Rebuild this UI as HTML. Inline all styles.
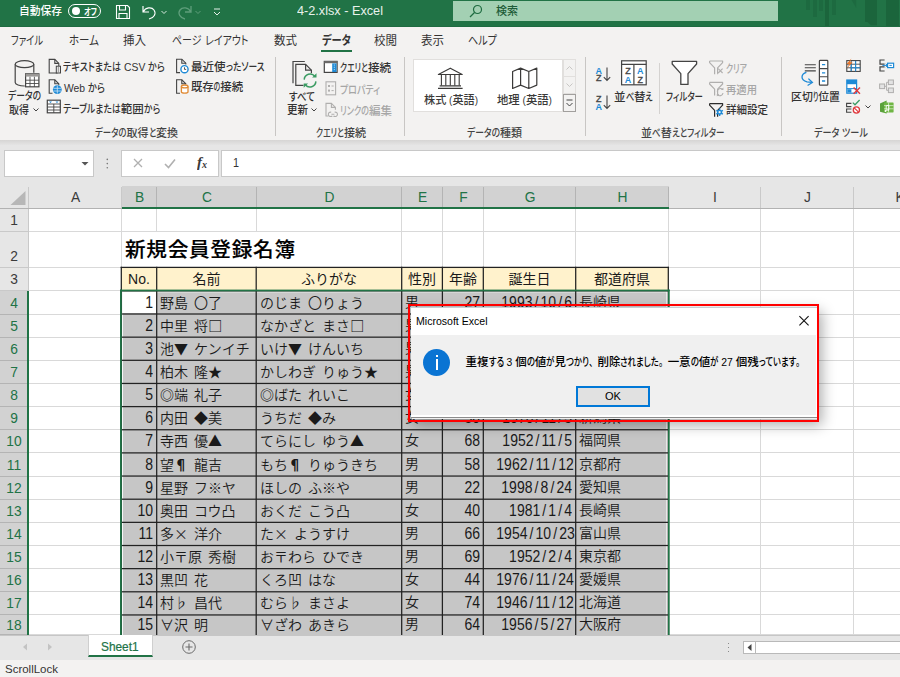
<!DOCTYPE html>
<html lang="ja"><head><meta charset="utf-8"><title>4-2.xlsx - Excel</title>
<style>
html,body{margin:0;padding:0;overflow:hidden;width:900px;height:677px}
body{background:#fff;font-family:"Liberation Sans","Noto Sans CJK JP",sans-serif;}
#root{position:absolute;left:0;top:0;width:900px;height:677px;overflow:hidden;background:#fff;contain:strict}
.b{position:absolute;display:block}
.t{position:absolute;white-space:nowrap;transform-origin:0 50%;display:block}
.k0{font-feature-settings:"palt"}
.k{display:inline-block;white-space:nowrap}
.k>span{display:inline-block;transform-origin:0 50%;font-feature-settings:"palt"}
.p>span{font-feature-settings:normal}
.c{position:absolute;white-space:nowrap;display:block;font-family:"Liberation Sans","Noto Sans CJK JP",sans-serif}
.sl{display:inline-block;width:9.4px;text-align:center}
</style></head>
<body>
<div id="root">
<div class="b" style="left:0px;top:0px;width:900px;height:27px;background:#217346"></div>
<div class="b" style="left:806px;top:0px;width:4px;height:10px;background:#1d6a40"></div>
<div class="b" style="left:813px;top:0px;width:4px;height:16.5px;background:#1d6a40"></div>
<div class="b" style="left:819px;top:0px;width:3.7px;height:11px;background:#1d6a40"></div>
<div class="b" style="left:825px;top:0px;width:4px;height:26px;background:#1b653c"></div>
<div class="b" style="left:832px;top:0px;width:3.7px;height:14.5px;background:#1d6a40"></div>
<div class="b" style="left:865.4px;top:0px;width:11.6px;height:22px;background:#1b653c"></div>
<div class="b" style="left:886.3px;top:0px;width:12.5px;height:26px;background:#1b653c"></div>
<svg class="b" style="left:851px;top:0px" width="6" height="9" viewBox="0 0 6 9"><path d="M0.6 0h4.6v8z" fill="#1d6a40"/></svg>
<svg class="b" style="left:865px;top:20px" width="13" height="6" viewBox="0 0 13 6"><path d="M0.4 0h11.6v5.2h-6z" fill="#1b653c"/></svg>
<div class="b" style="left:0px;top:25.6px;width:900px;height:1.4px;background:#1e6b41"></div>
<span class="t" style="left:19.00px;top:3.00px;font-size:11.5px;line-height:17px;color:#ffffff;font-weight:500;transform:scaleX(0.9348);">自動保存</span>
<div class="b" style="left:68px;top:4px;width:33px;height:14px;border:1px solid #fff;border-radius:8px;box-sizing:border-box"></div>
<div class="b" style="left:72px;top:7px;width:8px;height:8px;border-radius:4px;background:#fff"></div>
<span class="t" style="left:84.00px;top:4.50px;font-size:9px;line-height:14px;color:#ffffff;font-weight:700;"><span class="k" style="width:13.00px"><span style="transform:scaleX(0.7901)">オフ</span></span></span>
<svg class="b" style="left:114px;top:3px" width="18" height="18" viewBox="0 0 18 18"><path d="M2.5 2.5h11l2 2v11h-13z M5.5 2.5v4.5h6v-4.5 M5 15.5v-5h8v5" fill="none" stroke="#fff" stroke-width="1.1"/></svg>
<svg class="b" style="left:140px;top:3px" width="18" height="18" viewBox="0 0 18 18"><path d="M3 3v6h6 M3.5 8.5c2-4 8-5 10.5-1.5s0 8-5 9" fill="none" stroke="#fff" stroke-width="1.15"/></svg>
<svg class="b" style="left:160px;top:8px" width="8" height="8" viewBox="0 0 8 8"><path d="M1.5 3l2.5 2.5l2.5-2.5" fill="none" stroke="#d5e8dc" stroke-width="1"/></svg>
<svg class="b" style="left:176px;top:3px" width="18" height="18" viewBox="0 0 18 18"><path d="M15 3v6h-6 M14.5 8.5c-2-4-8-5-10.5-1.5s0 8 5 9" fill="none" stroke="#5f9e7b" stroke-width="1.3"/></svg>
<svg class="b" style="left:194px;top:8px" width="8" height="8" viewBox="0 0 8 8"><path d="M1.5 3l2.5 2.5l2.5-2.5" fill="none" stroke="#5f9e7b" stroke-width="1"/></svg>
<svg class="b" style="left:212px;top:6px" width="10" height="12" viewBox="0 0 10 12"><path d="M2 3h6 M2 6l3 3l3-3" fill="none" stroke="#e4f0e9" stroke-width="1"/></svg>
<span class="t" style="left:297.00px;top:2.00px;font-size:12px;line-height:18px;color:#e8f2ec;font-weight:500;transform:scaleX(1.0570);">4-2.xlsx  -  Excel</span>
<div class="b" style="left:453px;top:1px;width:325px;height:20px;background:#a3d0b3"></div>
<svg class="b" style="left:468px;top:3px" width="16" height="16" viewBox="0 0 16 16"><circle cx="9.5" cy="6.5" r="4" fill="none" stroke="#1e6b40" stroke-width="1.2"/><path d="M6.5 9.5l-4.5 4.5" stroke="#1e6b40" stroke-width="1.3"/></svg>
<span class="t" style="left:496.00px;top:3.00px;font-size:11px;line-height:16px;color:#1e5c38;font-weight:500;">検索</span>
<div class="b" style="left:0px;top:27px;width:900px;height:113px;background:#f3f2f1"></div>
<span class="t" style="left:11.00px;top:32.00px;font-size:12px;line-height:18px;color:#333333;font-weight:400;"><span class="k" style="width:32.00px"><span style="transform:scaleX(0.7699)">ファイル</span></span></span>
<span class="t" style="left:69.00px;top:32.00px;font-size:12px;line-height:18px;color:#333333;font-weight:400;"><span class="k" style="width:30.00px"><span style="transform:scaleX(0.8735)">ホーム</span></span></span>
<span class="t" style="left:123.00px;top:32.00px;font-size:12px;line-height:18px;color:#333333;font-weight:400;transform:scaleX(0.9577);">挿入</span>
<span class="t" style="left:172.00px;top:32.00px;font-size:12px;line-height:18px;color:#333333;font-weight:400;"><span class="k" style="width:29.51px"><span style="transform:scaleX(0.8303)">ページ</span></span><span style="font-size:0.9em"> </span><span class="k" style="width:43.49px"><span style="transform:scaleX(0.8303)">レイアウト</span></span></span>
<span class="t" style="left:274.00px;top:32.00px;font-size:12px;line-height:18px;color:#333333;font-weight:400;transform:scaleX(0.9577);">数式</span>
<span class="t" style="left:322.00px;top:32.00px;font-size:12px;line-height:18px;color:#333333;font-weight:700;"><span class="k" style="width:29.00px"><span style="transform:scaleX(0.8557)">データ</span></span></span>
<span class="t" style="left:374.00px;top:32.00px;font-size:12px;line-height:18px;color:#333333;font-weight:400;transform:scaleX(0.9577);">校閲</span>
<span class="t" style="left:421.00px;top:32.00px;font-size:12px;line-height:18px;color:#333333;font-weight:400;transform:scaleX(0.9577);">表示</span>
<span class="t" style="left:468.00px;top:32.00px;font-size:12px;line-height:18px;color:#333333;font-weight:400;"><span class="k" style="width:29.00px"><span style="transform:scaleX(0.8421)">ヘルプ</span></span></span>
<div class="b" style="left:321px;top:50px;width:31px;height:2px;background:#217346"></div>
<div class="b" style="left:275px;top:57px;width:1px;height:79px;background:#c8c6c4"></div>
<div class="b" style="left:404px;top:57px;width:1px;height:79px;background:#c8c6c4"></div>
<div class="b" style="left:585px;top:57px;width:1px;height:79px;background:#c8c6c4"></div>
<div class="b" style="left:781px;top:57px;width:1px;height:79px;background:#c8c6c4"></div>
<div class="b" style="left:659px;top:63px;width:1px;height:51px;background:#d4d2d0"></div>
<span class="t" style="left:95.00px;top:124.50px;font-size:11px;line-height:16px;color:#444444;font-weight:500;"><span class="k" style="width:31.59px"><span style="transform:scaleX(0.7638)">データの</span></span>取得<span class="k" style="width:7.41px"><span style="transform:scaleX(0.7638)">と</span></span>変換</span>
<span class="t" style="left:316.00px;top:124.50px;font-size:11px;line-height:16px;color:#444444;font-weight:500;"><span class="k" style="width:28.00px"><span style="transform:scaleX(0.7154)">クエリと</span></span>接続</span>
<span class="t" style="left:467.00px;top:124.50px;font-size:11px;line-height:16px;color:#444444;font-weight:500;"><span class="k" style="width:33.00px"><span style="transform:scaleX(0.7979)">データの</span></span>種類</span>
<span class="t" style="left:641.00px;top:124.50px;font-size:11px;line-height:16px;color:#444444;font-weight:500;">並<span class="k" style="width:8.67px"><span style="transform:scaleX(0.7714)">べ</span></span>替<span class="k" style="width:52.33px"><span style="transform:scaleX(0.7714)">えとフィルター</span></span></span>
<span class="t" style="left:814.00px;top:124.50px;font-size:11px;line-height:16px;color:#444444;font-weight:500;"><span class="k" style="width:25.41px"><span style="transform:scaleX(0.8264)">データ</span></span><span style="font-size:0.9em"> </span><span class="k" style="width:25.84px"><span style="transform:scaleX(0.8264)">ツール</span></span></span>
<span class="t" style="left:8.00px;top:88.00px;font-size:11.5px;line-height:17px;color:#333333;font-weight:500;"><span class="k" style="width:33.00px"><span style="transform:scaleX(0.7633)">データの</span></span></span>
<span class="t" style="left:9.00px;top:101.50px;font-size:11.5px;line-height:17px;color:#333333;font-weight:500;transform:scaleX(0.8696);">取得</span>
<svg class="b" style="left:32px;top:106px" width="8" height="8" viewBox="0 0 8 8"><path d="M1.5 2.5l2.5 2.5l2.5-2.5" fill="none" stroke="#444" stroke-width="1"/></svg>
<span class="t" style="left:63.00px;top:59.00px;font-size:11.5px;line-height:17px;color:#333333;font-weight:500;"><span class="k" style="width:58.18px"><span style="transform:scaleX(0.7954)">テキストまたは</span></span><span style="font-size:0.9em"> CSV </span><span class="k" style="width:16.79px"><span style="transform:scaleX(0.7954)">から</span></span></span>
<span class="t" style="left:64.00px;top:79.50px;font-size:11.5px;line-height:17px;color:#333333;font-weight:500;"><span style="font-size:0.9em">Web </span><span class="k" style="width:17.03px"><span style="transform:scaleX(0.8068)">から</span></span></span>
<span class="t" style="left:63.00px;top:100.50px;font-size:11.5px;line-height:17px;color:#333333;font-weight:500;"><span class="k" style="width:57.75px"><span style="transform:scaleX(0.7700)">テーブルまたは</span></span>範囲<span class="k" style="width:16.25px"><span style="transform:scaleX(0.7700)">から</span></span></span>
<span class="t" style="left:191.00px;top:59.00px;font-size:11.5px;line-height:17px;color:#333333;font-weight:500;">最近使<span class="k" style="width:38.50px"><span style="transform:scaleX(0.7589)">ったソース</span></span></span>
<span class="t" style="left:191.00px;top:79.00px;font-size:11.5px;line-height:17px;color:#333333;font-weight:500;transform:scaleX(0.9875);">既存<span class="k" style="width:6.66px"><span style="transform:scaleX(0.6000)">の</span></span>接続</span>
<span class="t" style="left:289.00px;top:89.00px;font-size:11.5px;line-height:17px;color:#333333;font-weight:500;"><span class="k" style="width:26.00px"><span style="transform:scaleX(0.8266)">すべて</span></span></span>
<span class="t" style="left:287.00px;top:101.50px;font-size:11.5px;line-height:17px;color:#333333;font-weight:500;transform:scaleX(0.9130);">更新</span>
<svg class="b" style="left:310px;top:106px" width="8" height="8" viewBox="0 0 8 8"><path d="M1.5 2.5l2.5 2.5l2.5-2.5" fill="none" stroke="#444" stroke-width="1"/></svg>
<span class="t" style="left:340.00px;top:59.50px;font-size:11.5px;line-height:17px;color:#333333;font-weight:500;"><span class="k" style="width:28.00px"><span style="transform:scaleX(0.6842)">クエリと</span></span>接続</span>
<span class="t" style="left:340.00px;top:81.50px;font-size:11.5px;line-height:17px;color:#a6a6a6;font-weight:500;"><span class="k" style="width:40.00px"><span style="transform:scaleX(0.7802)">プロパティ</span></span></span>
<span class="t" style="left:340.00px;top:102.50px;font-size:11.5px;line-height:17px;color:#a6a6a6;font-weight:500;"><span class="k" style="width:29.00px"><span style="transform:scaleX(0.7065)">リンクの</span></span>編集</span>
<div class="b" style="left:413px;top:59px;width:150px;height:53px;background:#fff;border:1px solid #e1dfdd;box-sizing:border-box"></div>
<span class="t" style="left:424.00px;top:92.00px;font-size:11.5px;line-height:17px;color:#3b3a39;font-weight:500;transform:scaleX(0.9681);">株式<span style="font-size:0.9em"> (</span>英語<span style="font-size:0.9em">)</span></span>
<span class="t" style="left:497.00px;top:92.00px;font-size:11.5px;line-height:17px;color:#3b3a39;font-weight:500;transform:scaleX(0.9860);">地理<span style="font-size:0.9em"> (</span>英語<span style="font-size:0.9em">)</span></span>
<div class="b" style="left:563px;top:59px;width:13px;height:18px;border:1px solid #e1dfdd;box-sizing:border-box;background:#f3f2f1"></div>
<div class="b" style="left:563px;top:76px;width:13px;height:18px;border:1px solid #e1dfdd;box-sizing:border-box;background:#f3f2f1"></div>
<div class="b" style="left:563px;top:94px;width:13px;height:18px;border:1px solid #a19f9d;box-sizing:border-box;background:#f3f2f1"></div>
<svg class="b" style="left:565px;top:64px" width="9" height="8" viewBox="0 0 9 8"><path d="M1.5 5.5l3-3l3 3" fill="none" stroke="#c8c6c4" stroke-width="1"/></svg>
<svg class="b" style="left:565px;top:81px" width="9" height="8" viewBox="0 0 9 8"><path d="M1.5 2.5l3 3l3-3" fill="none" stroke="#c8c6c4" stroke-width="1"/></svg>
<svg class="b" style="left:565px;top:97px" width="9" height="12" viewBox="0 0 9 12"><path d="M1.5 3h6 M1.5 6l3 3l3-3" fill="none" stroke="#444" stroke-width="1"/></svg>
<span class="t" style="left:614.00px;top:89.00px;font-size:11.5px;line-height:17px;color:#333333;font-weight:500;">並<span class="k" style="width:8.47px"><span style="transform:scaleX(0.7221)">べ</span></span>替<span class="k" style="width:7.53px"><span style="transform:scaleX(0.7221)">え</span></span></span>
<span class="t" style="left:666.00px;top:88.50px;font-size:11.5px;line-height:17px;color:#333333;font-weight:500;"><span class="k" style="width:37.00px"><span style="transform:scaleX(0.7343)">フィルター</span></span></span>
<span class="t" style="left:726.00px;top:60.50px;font-size:11.5px;line-height:17px;color:#a6a6a6;font-weight:500;"><span class="k" style="width:21.00px"><span style="transform:scaleX(0.6896)">クリア</span></span></span>
<span class="t" style="left:726.00px;top:81.50px;font-size:11.5px;line-height:17px;color:#a6a6a6;font-weight:500;transform:scaleX(0.8986);">再適用</span>
<span class="t" style="left:726.00px;top:102.00px;font-size:11.5px;line-height:17px;color:#333333;font-weight:500;transform:scaleX(0.9130);">詳細設定</span>
<span class="t" style="left:791.00px;top:88.50px;font-size:11.5px;line-height:17px;color:#333333;font-weight:500;transform:scaleX(0.9469);">区切<span class="k" style="width:5.75px"><span style="transform:scaleX(0.6000)">り</span></span>位置</span>
<svg class="b" style="left:864px;top:103px" width="8" height="8" viewBox="0 0 8 8"><path d="M1.5 2.5l2.5 2.5l2.5-2.5" fill="none" stroke="#444" stroke-width="1"/></svg>
<div class="b" style="left:0px;top:140px;width:900px;height:5px;background:linear-gradient(#d6d5d4,#e4e4e4)"></div>
<div class="b" style="left:0px;top:145px;width:900px;height:42px;background:#e6e6e6"></div>
<div class="b" style="left:4px;top:150px;width:90px;height:27px;background:#fff;border:1px solid #c8c8c8;box-sizing:border-box"></div>
<svg class="b" style="left:80px;top:160px" width="10" height="8" viewBox="0 0 10 8"><path d="M1.5 2l3.5 3.5l3.5-3.5z" fill="#555"/></svg>
<svg class="b" style="left:106px;top:158px" width="3" height="3" viewBox="0 0 3 3"><circle cx="1.3" cy="1.4" r="0.8" fill="#777"/></svg>
<svg class="b" style="left:106px;top:162px" width="3" height="3" viewBox="0 0 3 3"><circle cx="1.3" cy="1.6" r="0.8" fill="#777"/></svg>
<svg class="b" style="left:106px;top:167px" width="3" height="3" viewBox="0 0 3 3"><circle cx="1.3" cy="0.8" r="0.8" fill="#777"/></svg>
<div class="b" style="left:121px;top:150px;width:98px;height:27px;background:#fff;border:1px solid #c8c8c8;box-sizing:border-box"></div>
<svg class="b" style="left:132px;top:157px" width="12" height="12" viewBox="0 0 12 12"><path d="M2 2l8 8 M10 2l-8 8" stroke="#b0b0b0" stroke-width="1.3" fill="none"/></svg>
<svg class="b" style="left:163px;top:157px" width="14" height="12" viewBox="0 0 14 12"><path d="M2 7l3.5 3.5l6.5-8" stroke="#b0b0b0" stroke-width="1.6" fill="none"/></svg>
<span class="t" style="left:196.50px;top:152.00px;font-size:14px;line-height:21px;color:#3a3a3a;font-weight:700;transform:scaleX(1.0702);font-family:'Liberation Serif',serif;font-style:italic;">f</span>
<span class="t" style="left:201.50px;top:158.00px;font-size:9.5px;line-height:14px;color:#3a3a3a;font-weight:700;transform:scaleX(1.0526);font-family:'Liberation Serif',serif;font-style:italic;">x</span>
<div class="b" style="left:221px;top:150px;width:681px;height:27px;background:#fff;border:1px solid #c8c8c8;box-sizing:border-box"></div>
<span class="t" style="left:233.00px;top:153.50px;font-size:12.5px;line-height:19px;color:#333;font-weight:500;transform:scaleX(0.8629);">1</span>
<div class="b" style="left:0px;top:186px;width:900px;height:449px;background:#fff"></div>
<div class="b" style="left:0px;top:186px;width:900px;height:23px;background:#e6e6e6"></div>
<div class="b" style="left:122px;top:186px;width:547px;height:23px;background:#d2d2d2"></div>
<div class="b" style="left:0px;top:209px;width:29px;height:426px;background:#e6e6e6"></div>
<div class="b" style="left:0px;top:291px;width:29px;height:344px;background:#d2d2d2"></div>
<svg class="b" style="left:9px;top:190px" width="18" height="16" viewBox="0 0 18 16"><path d="M16.5 1v14h-15z" fill="#b7b7b7"/></svg>
<div class="b" style="left:121px;top:187px;width:1px;height:22px;background:#c9c9c9"></div>
<span class="t" style="left:71.50px;top:187.00px;font-size:13.8px;line-height:21px;color:#3a3a3a;font-weight:400;transform:translateX(-50%);left:75.5px;">A</span>
<div class="b" style="left:156px;top:187px;width:1px;height:22px;background:#b4b4b4"></div>
<span class="t" style="left:135.50px;top:187.00px;font-size:13.8px;line-height:21px;color:#217346;font-weight:400;transform:translateX(-50%);left:139.5px;">B</span>
<div class="b" style="left:256px;top:187px;width:1px;height:22px;background:#b4b4b4"></div>
<span class="t" style="left:203.00px;top:187.00px;font-size:13.8px;line-height:21px;color:#217346;font-weight:400;transform:translateX(-50%);left:207.0px;">C</span>
<div class="b" style="left:401px;top:187px;width:1px;height:22px;background:#b4b4b4"></div>
<span class="t" style="left:325.50px;top:187.00px;font-size:13.8px;line-height:21px;color:#217346;font-weight:400;transform:translateX(-50%);left:329.5px;">D</span>
<div class="b" style="left:442px;top:187px;width:1px;height:22px;background:#b4b4b4"></div>
<span class="t" style="left:418.50px;top:187.00px;font-size:13.8px;line-height:21px;color:#217346;font-weight:400;transform:translateX(-50%);left:422.5px;">E</span>
<div class="b" style="left:483px;top:187px;width:1px;height:22px;background:#b4b4b4"></div>
<span class="t" style="left:459.50px;top:187.00px;font-size:13.8px;line-height:21px;color:#217346;font-weight:400;transform:translateX(-50%);left:463.5px;">F</span>
<div class="b" style="left:575px;top:187px;width:1px;height:22px;background:#b4b4b4"></div>
<span class="t" style="left:526.00px;top:187.00px;font-size:13.8px;line-height:21px;color:#217346;font-weight:400;transform:translateX(-50%);left:530.0px;">G</span>
<div class="b" style="left:668px;top:187px;width:1px;height:22px;background:#b4b4b4"></div>
<span class="t" style="left:618.50px;top:187.00px;font-size:13.8px;line-height:21px;color:#217346;font-weight:400;transform:translateX(-50%);left:622.5px;">H</span>
<div class="b" style="left:760px;top:187px;width:1px;height:22px;background:#c9c9c9"></div>
<span class="t" style="left:711.00px;top:187.00px;font-size:13.8px;line-height:21px;color:#3a3a3a;font-weight:400;transform:translateX(-50%);left:715.0px;">I</span>
<div class="b" style="left:853px;top:187px;width:1px;height:22px;background:#c9c9c9"></div>
<span class="t" style="left:803.50px;top:187.00px;font-size:13.8px;line-height:21px;color:#3a3a3a;font-weight:400;transform:translateX(-50%);left:807.5px;">J</span>
<div class="b" style="left:945px;top:187px;width:1px;height:22px;background:#c9c9c9"></div>
<span class="t" style="left:896.00px;top:187.00px;font-size:13.8px;line-height:21px;color:#3a3a3a;font-weight:400;transform:translateX(-50%);left:900.0px;">K</span>
<div class="b" style="left:28px;top:187px;width:1px;height:22px;background:#c9c9c9"></div>
<div class="b" style="left:0px;top:208px;width:900px;height:1px;background:#b2b2b2"></div>
<div class="b" style="left:122px;top:207px;width:547px;height:2px;background:#217346"></div>
<div class="b" style="left:121px;top:209px;width:1px;height:426px;background:#d9d9d9"></div>
<div class="b" style="left:156px;top:209px;width:1px;height:426px;background:#d9d9d9"></div>
<div class="b" style="left:256px;top:209px;width:1px;height:426px;background:#d9d9d9"></div>
<div class="b" style="left:401px;top:209px;width:1px;height:426px;background:#d9d9d9"></div>
<div class="b" style="left:442px;top:209px;width:1px;height:426px;background:#d9d9d9"></div>
<div class="b" style="left:483px;top:209px;width:1px;height:426px;background:#d9d9d9"></div>
<div class="b" style="left:575px;top:209px;width:1px;height:426px;background:#d9d9d9"></div>
<div class="b" style="left:668px;top:209px;width:1px;height:426px;background:#d9d9d9"></div>
<div class="b" style="left:760px;top:209px;width:1px;height:426px;background:#d9d9d9"></div>
<div class="b" style="left:853px;top:209px;width:1px;height:426px;background:#d9d9d9"></div>
<div class="b" style="left:945px;top:209px;width:1px;height:426px;background:#d9d9d9"></div>
<div class="b" style="left:29px;top:231px;width:871px;height:1px;background:#d9d9d9"></div>
<div class="b" style="left:0px;top:231px;width:28px;height:1px;background:#c9c9c9"></div>
<span class="t" style="left:0.00px;top:210.30px;font-size:13.8px;line-height:21px;color:#3a3a3a;font-weight:400;transform:translateX(-50%);left:14px;">1</span>
<div class="b" style="left:29px;top:267px;width:871px;height:1px;background:#d9d9d9"></div>
<div class="b" style="left:0px;top:267px;width:28px;height:1px;background:#c9c9c9"></div>
<span class="t" style="left:0.00px;top:245.50px;font-size:13.8px;line-height:21px;color:#3a3a3a;font-weight:400;transform:translateX(-50%);left:14px;">2</span>
<div class="b" style="left:29px;top:290px;width:871px;height:1px;background:#d9d9d9"></div>
<div class="b" style="left:0px;top:290px;width:28px;height:1px;background:#c9c9c9"></div>
<span class="t" style="left:0.00px;top:269.30px;font-size:13.8px;line-height:21px;color:#3a3a3a;font-weight:400;transform:translateX(-50%);left:14px;">3</span>
<div class="b" style="left:29px;top:314px;width:871px;height:1px;background:#d9d9d9"></div>
<div class="b" style="left:0px;top:314px;width:28px;height:1px;background:#b4b4b4"></div>
<span class="t" style="left:0.00px;top:292.80px;font-size:13.8px;line-height:21px;color:#217346;font-weight:400;transform:translateX(-50%);left:14px;">4</span>
<div class="b" style="left:29px;top:337px;width:871px;height:1px;background:#d9d9d9"></div>
<div class="b" style="left:0px;top:337px;width:28px;height:1px;background:#b4b4b4"></div>
<span class="t" style="left:0.00px;top:316.30px;font-size:13.8px;line-height:21px;color:#217346;font-weight:400;transform:translateX(-50%);left:14px;">5</span>
<div class="b" style="left:29px;top:360px;width:871px;height:1px;background:#d9d9d9"></div>
<div class="b" style="left:0px;top:360px;width:28px;height:1px;background:#b4b4b4"></div>
<span class="t" style="left:0.00px;top:339.30px;font-size:13.8px;line-height:21px;color:#217346;font-weight:400;transform:translateX(-50%);left:14px;">6</span>
<div class="b" style="left:29px;top:383px;width:871px;height:1px;background:#d9d9d9"></div>
<div class="b" style="left:0px;top:383px;width:28px;height:1px;background:#b4b4b4"></div>
<span class="t" style="left:0.00px;top:362.30px;font-size:13.8px;line-height:21px;color:#217346;font-weight:400;transform:translateX(-50%);left:14px;">7</span>
<div class="b" style="left:29px;top:406px;width:871px;height:1px;background:#d9d9d9"></div>
<div class="b" style="left:0px;top:406px;width:28px;height:1px;background:#b4b4b4"></div>
<span class="t" style="left:0.00px;top:385.30px;font-size:13.8px;line-height:21px;color:#217346;font-weight:400;transform:translateX(-50%);left:14px;">8</span>
<div class="b" style="left:29px;top:429px;width:871px;height:1px;background:#d9d9d9"></div>
<div class="b" style="left:0px;top:429px;width:28px;height:1px;background:#b4b4b4"></div>
<span class="t" style="left:0.00px;top:408.30px;font-size:13.8px;line-height:21px;color:#217346;font-weight:400;transform:translateX(-50%);left:14px;">9</span>
<div class="b" style="left:29px;top:452px;width:871px;height:1px;background:#d9d9d9"></div>
<div class="b" style="left:0px;top:452px;width:28px;height:1px;background:#b4b4b4"></div>
<span class="t" style="left:0.00px;top:431.30px;font-size:13.8px;line-height:21px;color:#217346;font-weight:400;transform:translateX(-50%);left:14px;">10</span>
<div class="b" style="left:29px;top:476px;width:871px;height:1px;background:#d9d9d9"></div>
<div class="b" style="left:0px;top:476px;width:28px;height:1px;background:#b4b4b4"></div>
<span class="t" style="left:0.00px;top:454.80px;font-size:13.8px;line-height:21px;color:#217346;font-weight:400;transform:translateX(-50%);left:14px;">11</span>
<div class="b" style="left:29px;top:499px;width:871px;height:1px;background:#d9d9d9"></div>
<div class="b" style="left:0px;top:499px;width:28px;height:1px;background:#b4b4b4"></div>
<span class="t" style="left:0.00px;top:478.30px;font-size:13.8px;line-height:21px;color:#217346;font-weight:400;transform:translateX(-50%);left:14px;">12</span>
<div class="b" style="left:29px;top:522px;width:871px;height:1px;background:#d9d9d9"></div>
<div class="b" style="left:0px;top:522px;width:28px;height:1px;background:#b4b4b4"></div>
<span class="t" style="left:0.00px;top:501.30px;font-size:13.8px;line-height:21px;color:#217346;font-weight:400;transform:translateX(-50%);left:14px;">13</span>
<div class="b" style="left:29px;top:545px;width:871px;height:1px;background:#d9d9d9"></div>
<div class="b" style="left:0px;top:545px;width:28px;height:1px;background:#b4b4b4"></div>
<span class="t" style="left:0.00px;top:524.30px;font-size:13.8px;line-height:21px;color:#217346;font-weight:400;transform:translateX(-50%);left:14px;">14</span>
<div class="b" style="left:29px;top:568px;width:871px;height:1px;background:#d9d9d9"></div>
<div class="b" style="left:0px;top:568px;width:28px;height:1px;background:#b4b4b4"></div>
<span class="t" style="left:0.00px;top:547.30px;font-size:13.8px;line-height:21px;color:#217346;font-weight:400;transform:translateX(-50%);left:14px;">15</span>
<div class="b" style="left:29px;top:591px;width:871px;height:1px;background:#d9d9d9"></div>
<div class="b" style="left:0px;top:591px;width:28px;height:1px;background:#b4b4b4"></div>
<span class="t" style="left:0.00px;top:570.30px;font-size:13.8px;line-height:21px;color:#217346;font-weight:400;transform:translateX(-50%);left:14px;">16</span>
<div class="b" style="left:29px;top:614px;width:871px;height:1px;background:#d9d9d9"></div>
<div class="b" style="left:0px;top:614px;width:28px;height:1px;background:#b4b4b4"></div>
<span class="t" style="left:0.00px;top:593.30px;font-size:13.8px;line-height:21px;color:#217346;font-weight:400;transform:translateX(-50%);left:14px;">17</span>
<div class="b" style="left:29px;top:634px;width:871px;height:1px;background:#d9d9d9"></div>
<div class="b" style="left:0px;top:634px;width:28px;height:1px;background:#b4b4b4"></div>
<span class="t" style="left:0.00px;top:614.80px;font-size:13.8px;line-height:21px;color:#217346;font-weight:400;transform:translateX(-50%);left:14px;">18</span>
<div class="b" style="left:28px;top:209px;width:1px;height:426px;background:#c9c9c9"></div>
<div class="b" style="left:27px;top:291px;width:2px;height:344px;background:#217346"></div>
<div class="b" style="left:123px;top:232px;width:278px;height:35px;background:#fff"></div>
<span class="c" style="left:125px;text-align:left;top:231.5px;height:36px;line-height:36px;font-size:20.6px;color:#000;font-weight:500;letter-spacing:0.75px;-webkit-text-stroke:0.15px #000;">新規会員登録名簿</span>
<div class="b" style="left:122px;top:268px;width:547px;height:23px;background:#fff2cc"></div>
<div class="b" style="left:122px;top:291px;width:547px;height:344px;background:#c6c6c6"></div>
<div class="b" style="left:123px;top:292px;width:33px;height:21px;background:#fff"></div>
<span class="c" style="left:122px;width:34px;text-align:center;top:268px;height:23px;line-height:23px;font-size:14px;color:#1a1a1a;font-weight:400;">No.</span>
<span class="c" style="left:157px;width:99px;text-align:center;top:268px;height:23px;line-height:23px;font-size:14px;color:#1a1a1a;font-weight:400;">名前</span>
<span class="c" style="left:257px;width:144px;text-align:center;top:268px;height:23px;line-height:23px;font-size:14px;color:#1a1a1a;font-weight:400;">ふりがな</span>
<span class="c" style="left:402px;width:40px;text-align:center;top:268px;height:23px;line-height:23px;font-size:14px;color:#1a1a1a;font-weight:400;">性別</span>
<span class="c" style="left:443px;width:40px;text-align:center;top:268px;height:23px;line-height:23px;font-size:14px;color:#1a1a1a;font-weight:400;">年齢</span>
<span class="c" style="left:484px;width:91px;text-align:center;top:268px;height:23px;line-height:23px;font-size:14px;color:#1a1a1a;font-weight:400;">誕生日</span>
<span class="c" style="left:576px;width:92px;text-align:center;top:268px;height:23px;line-height:23px;font-size:14px;color:#1a1a1a;font-weight:400;">都道府県</span>
<span class="c" style="left:122px;width:31px;text-align:right;top:290px;height:24px;line-height:24px;font-size:16.3px;color:#1a1a1a;font-weight:400;transform:scaleX(0.86);transform-origin:100% 50%;">1</span>
<span class="c" style="left:160px;text-align:left;top:290px;height:24px;line-height:24px;font-size:14px;color:#1a1a1a;font-weight:350;font-family:'Noto Sans CJK JP',sans-serif;word-spacing:3px;">野島 〇了</span>
<span class="c" style="left:260px;text-align:left;top:290px;height:24px;line-height:24px;font-size:14px;color:#1a1a1a;font-weight:350;font-family:'Noto Sans CJK JP',sans-serif;word-spacing:3px;">のじま 〇りょう</span>
<span class="c" style="left:405px;text-align:left;top:290px;height:24px;line-height:24px;font-size:14px;color:#1a1a1a;font-weight:350;">男</span>
<span class="c" style="left:443px;width:37px;text-align:right;top:290px;height:24px;line-height:24px;font-size:16.3px;color:#1a1a1a;font-weight:400;transform:scaleX(0.86);transform-origin:100% 50%;">27</span>
<span class="c" style="left:484px;width:88px;text-align:right;top:290px;height:24px;line-height:24px;font-size:16.3px;color:#1a1a1a;font-weight:400;transform:scaleX(0.86);transform-origin:100% 50%;">1993<span class="sl">/</span>10<span class="sl">/</span>6</span>
<span class="c" style="left:579px;text-align:left;top:290px;height:24px;line-height:24px;font-size:14px;color:#1a1a1a;font-weight:350;">長崎県</span>
<span class="c" style="left:122px;width:31px;text-align:right;top:314px;height:23px;line-height:23px;font-size:16.3px;color:#1a1a1a;font-weight:400;transform:scaleX(0.86);transform-origin:100% 50%;">2</span>
<span class="c" style="left:160px;text-align:left;top:314px;height:23px;line-height:23px;font-size:14px;color:#1a1a1a;font-weight:350;font-family:'Noto Sans CJK JP',sans-serif;word-spacing:3px;">中里 将<span style="font-weight:700">□</span></span>
<span class="c" style="left:260px;text-align:left;top:314px;height:23px;line-height:23px;font-size:14px;color:#1a1a1a;font-weight:350;font-family:'Noto Sans CJK JP',sans-serif;word-spacing:3px;">なかざと まさ<span style="font-weight:700">□</span></span>
<span class="c" style="left:405px;text-align:left;top:314px;height:23px;line-height:23px;font-size:14px;color:#1a1a1a;font-weight:350;">男</span>
<span class="c" style="left:443px;width:37px;text-align:right;top:314px;height:23px;line-height:23px;font-size:16.3px;color:#1a1a1a;font-weight:400;transform:scaleX(0.86);transform-origin:100% 50%;">35</span>
<span class="c" style="left:484px;width:88px;text-align:right;top:314px;height:23px;line-height:23px;font-size:16.3px;color:#1a1a1a;font-weight:400;transform:scaleX(0.86);transform-origin:100% 50%;">1985<span class="sl">/</span>3<span class="sl">/</span>14</span>
<span class="c" style="left:579px;text-align:left;top:314px;height:23px;line-height:23px;font-size:14px;color:#1a1a1a;font-weight:350;">千葉県</span>
<span class="c" style="left:122px;width:31px;text-align:right;top:337px;height:23px;line-height:23px;font-size:16.3px;color:#1a1a1a;font-weight:400;transform:scaleX(0.86);transform-origin:100% 50%;">3</span>
<span class="c" style="left:160px;text-align:left;top:337px;height:23px;line-height:23px;font-size:14px;color:#1a1a1a;font-weight:350;font-family:'Noto Sans CJK JP',sans-serif;word-spacing:3px;">池▼ ケンイチ</span>
<span class="c" style="left:260px;text-align:left;top:337px;height:23px;line-height:23px;font-size:14px;color:#1a1a1a;font-weight:350;font-family:'Noto Sans CJK JP',sans-serif;word-spacing:3px;">いけ▼ けんいち</span>
<span class="c" style="left:405px;text-align:left;top:337px;height:23px;line-height:23px;font-size:14px;color:#1a1a1a;font-weight:350;">男</span>
<span class="c" style="left:443px;width:37px;text-align:right;top:337px;height:23px;line-height:23px;font-size:16.3px;color:#1a1a1a;font-weight:400;transform:scaleX(0.86);transform-origin:100% 50%;">48</span>
<span class="c" style="left:484px;width:88px;text-align:right;top:337px;height:23px;line-height:23px;font-size:16.3px;color:#1a1a1a;font-weight:400;transform:scaleX(0.86);transform-origin:100% 50%;">1972<span class="sl">/</span>7<span class="sl">/</span>30</span>
<span class="c" style="left:579px;text-align:left;top:337px;height:23px;line-height:23px;font-size:14px;color:#1a1a1a;font-weight:350;">兵庫県</span>
<span class="c" style="left:122px;width:31px;text-align:right;top:360px;height:23px;line-height:23px;font-size:16.3px;color:#1a1a1a;font-weight:400;transform:scaleX(0.86);transform-origin:100% 50%;">4</span>
<span class="c" style="left:160px;text-align:left;top:360px;height:23px;line-height:23px;font-size:14px;color:#1a1a1a;font-weight:350;font-family:'Noto Sans CJK JP',sans-serif;word-spacing:3px;">柏木 隆★</span>
<span class="c" style="left:260px;text-align:left;top:360px;height:23px;line-height:23px;font-size:14px;color:#1a1a1a;font-weight:350;font-family:'Noto Sans CJK JP',sans-serif;word-spacing:3px;">かしわぎ りゅう★</span>
<span class="c" style="left:405px;text-align:left;top:360px;height:23px;line-height:23px;font-size:14px;color:#1a1a1a;font-weight:350;">男</span>
<span class="c" style="left:443px;width:37px;text-align:right;top:360px;height:23px;line-height:23px;font-size:16.3px;color:#1a1a1a;font-weight:400;transform:scaleX(0.86);transform-origin:100% 50%;">51</span>
<span class="c" style="left:484px;width:88px;text-align:right;top:360px;height:23px;line-height:23px;font-size:16.3px;color:#1a1a1a;font-weight:400;transform:scaleX(0.86);transform-origin:100% 50%;">1969<span class="sl">/</span>9<span class="sl">/</span>2</span>
<span class="c" style="left:579px;text-align:left;top:360px;height:23px;line-height:23px;font-size:14px;color:#1a1a1a;font-weight:350;">埼玉県</span>
<span class="c" style="left:122px;width:31px;text-align:right;top:383px;height:23px;line-height:23px;font-size:16.3px;color:#1a1a1a;font-weight:400;transform:scaleX(0.86);transform-origin:100% 50%;">5</span>
<span class="c" style="left:160px;text-align:left;top:383px;height:23px;line-height:23px;font-size:14px;color:#1a1a1a;font-weight:350;font-family:'Noto Sans CJK JP',sans-serif;word-spacing:3px;"><span style="font-weight:700">◎</span>端 礼子</span>
<span class="c" style="left:260px;text-align:left;top:383px;height:23px;line-height:23px;font-size:14px;color:#1a1a1a;font-weight:350;font-family:'Noto Sans CJK JP',sans-serif;word-spacing:3px;"><span style="font-weight:700">◎</span>ばた れいこ</span>
<span class="c" style="left:405px;text-align:left;top:383px;height:23px;line-height:23px;font-size:14px;color:#1a1a1a;font-weight:350;">女</span>
<span class="c" style="left:443px;width:37px;text-align:right;top:383px;height:23px;line-height:23px;font-size:16.3px;color:#1a1a1a;font-weight:400;transform:scaleX(0.86);transform-origin:100% 50%;">33</span>
<span class="c" style="left:484px;width:88px;text-align:right;top:383px;height:23px;line-height:23px;font-size:16.3px;color:#1a1a1a;font-weight:400;transform:scaleX(0.86);transform-origin:100% 50%;">1987<span class="sl">/</span>12<span class="sl">/</span>19</span>
<span class="c" style="left:579px;text-align:left;top:383px;height:23px;line-height:23px;font-size:14px;color:#1a1a1a;font-weight:350;">静岡県</span>
<span class="c" style="left:122px;width:31px;text-align:right;top:406px;height:23px;line-height:23px;font-size:16.3px;color:#1a1a1a;font-weight:400;transform:scaleX(0.86);transform-origin:100% 50%;">6</span>
<span class="c" style="left:160px;text-align:left;top:406px;height:23px;line-height:23px;font-size:14px;color:#1a1a1a;font-weight:350;font-family:'Noto Sans CJK JP',sans-serif;word-spacing:3px;">内田 ◆美</span>
<span class="c" style="left:260px;text-align:left;top:406px;height:23px;line-height:23px;font-size:14px;color:#1a1a1a;font-weight:350;font-family:'Noto Sans CJK JP',sans-serif;word-spacing:3px;">うちだ ◆み</span>
<span class="c" style="left:405px;text-align:left;top:406px;height:23px;line-height:23px;font-size:14px;color:#1a1a1a;font-weight:350;">女</span>
<span class="c" style="left:443px;width:37px;text-align:right;top:406px;height:23px;line-height:23px;font-size:16.3px;color:#1a1a1a;font-weight:400;transform:scaleX(0.86);transform-origin:100% 50%;">50</span>
<span class="c" style="left:484px;width:88px;text-align:right;top:406px;height:23px;line-height:23px;font-size:16.3px;color:#1a1a1a;font-weight:400;transform:scaleX(0.86);transform-origin:100% 50%;">1970<span class="sl">/</span>11<span class="sl">/</span>3</span>
<span class="c" style="left:579px;text-align:left;top:406px;height:23px;line-height:23px;font-size:14px;color:#1a1a1a;font-weight:350;">新潟県</span>
<span class="c" style="left:122px;width:31px;text-align:right;top:429px;height:23px;line-height:23px;font-size:16.3px;color:#1a1a1a;font-weight:400;transform:scaleX(0.86);transform-origin:100% 50%;">7</span>
<span class="c" style="left:160px;text-align:left;top:429px;height:23px;line-height:23px;font-size:14px;color:#1a1a1a;font-weight:350;font-family:'Noto Sans CJK JP',sans-serif;word-spacing:3px;">寺西 優▲</span>
<span class="c" style="left:260px;text-align:left;top:429px;height:23px;line-height:23px;font-size:14px;color:#1a1a1a;font-weight:350;font-family:'Noto Sans CJK JP',sans-serif;word-spacing:3px;">てらにし ゆう▲</span>
<span class="c" style="left:405px;text-align:left;top:429px;height:23px;line-height:23px;font-size:14px;color:#1a1a1a;font-weight:350;">女</span>
<span class="c" style="left:443px;width:37px;text-align:right;top:429px;height:23px;line-height:23px;font-size:16.3px;color:#1a1a1a;font-weight:400;transform:scaleX(0.86);transform-origin:100% 50%;">68</span>
<span class="c" style="left:484px;width:88px;text-align:right;top:429px;height:23px;line-height:23px;font-size:16.3px;color:#1a1a1a;font-weight:400;transform:scaleX(0.86);transform-origin:100% 50%;">1952<span class="sl">/</span>11<span class="sl">/</span>5</span>
<span class="c" style="left:579px;text-align:left;top:429px;height:23px;line-height:23px;font-size:14px;color:#1a1a1a;font-weight:350;">福岡県</span>
<span class="c" style="left:122px;width:31px;text-align:right;top:452px;height:24px;line-height:24px;font-size:16.3px;color:#1a1a1a;font-weight:400;transform:scaleX(0.86);transform-origin:100% 50%;">8</span>
<span class="c" style="left:160px;text-align:left;top:452px;height:24px;line-height:24px;font-size:14px;color:#1a1a1a;font-weight:350;font-family:'Noto Sans CJK JP',sans-serif;word-spacing:3px;">望<span style="font-weight:700">¶</span> 龍吉</span>
<span class="c" style="left:260px;text-align:left;top:452px;height:24px;line-height:24px;font-size:14px;color:#1a1a1a;font-weight:350;font-family:'Noto Sans CJK JP',sans-serif;word-spacing:3px;">もち<span style="font-weight:700">¶</span> りゅうきち</span>
<span class="c" style="left:405px;text-align:left;top:452px;height:24px;line-height:24px;font-size:14px;color:#1a1a1a;font-weight:350;">男</span>
<span class="c" style="left:443px;width:37px;text-align:right;top:452px;height:24px;line-height:24px;font-size:16.3px;color:#1a1a1a;font-weight:400;transform:scaleX(0.86);transform-origin:100% 50%;">58</span>
<span class="c" style="left:484px;width:88px;text-align:right;top:452px;height:24px;line-height:24px;font-size:16.3px;color:#1a1a1a;font-weight:400;transform:scaleX(0.86);transform-origin:100% 50%;">1962<span class="sl">/</span>11<span class="sl">/</span>12</span>
<span class="c" style="left:579px;text-align:left;top:452px;height:24px;line-height:24px;font-size:14px;color:#1a1a1a;font-weight:350;">京都府</span>
<span class="c" style="left:122px;width:31px;text-align:right;top:476px;height:23px;line-height:23px;font-size:16.3px;color:#1a1a1a;font-weight:400;transform:scaleX(0.86);transform-origin:100% 50%;">9</span>
<span class="c" style="left:160px;text-align:left;top:476px;height:23px;line-height:23px;font-size:14px;color:#1a1a1a;font-weight:350;font-family:'Noto Sans CJK JP',sans-serif;word-spacing:3px;">星野 フ※ヤ</span>
<span class="c" style="left:260px;text-align:left;top:476px;height:23px;line-height:23px;font-size:14px;color:#1a1a1a;font-weight:350;font-family:'Noto Sans CJK JP',sans-serif;word-spacing:3px;">ほしの ふ※や</span>
<span class="c" style="left:405px;text-align:left;top:476px;height:23px;line-height:23px;font-size:14px;color:#1a1a1a;font-weight:350;">男</span>
<span class="c" style="left:443px;width:37px;text-align:right;top:476px;height:23px;line-height:23px;font-size:16.3px;color:#1a1a1a;font-weight:400;transform:scaleX(0.86);transform-origin:100% 50%;">22</span>
<span class="c" style="left:484px;width:88px;text-align:right;top:476px;height:23px;line-height:23px;font-size:16.3px;color:#1a1a1a;font-weight:400;transform:scaleX(0.86);transform-origin:100% 50%;">1998<span class="sl">/</span>8<span class="sl">/</span>24</span>
<span class="c" style="left:579px;text-align:left;top:476px;height:23px;line-height:23px;font-size:14px;color:#1a1a1a;font-weight:350;">愛知県</span>
<span class="c" style="left:122px;width:31px;text-align:right;top:499px;height:23px;line-height:23px;font-size:16.3px;color:#1a1a1a;font-weight:400;transform:scaleX(0.86);transform-origin:100% 50%;">10</span>
<span class="c" style="left:160px;text-align:left;top:499px;height:23px;line-height:23px;font-size:14px;color:#1a1a1a;font-weight:350;font-family:'Noto Sans CJK JP',sans-serif;word-spacing:3px;">奥田 コウ凸</span>
<span class="c" style="left:260px;text-align:left;top:499px;height:23px;line-height:23px;font-size:14px;color:#1a1a1a;font-weight:350;font-family:'Noto Sans CJK JP',sans-serif;word-spacing:3px;">おくだ こう凸</span>
<span class="c" style="left:405px;text-align:left;top:499px;height:23px;line-height:23px;font-size:14px;color:#1a1a1a;font-weight:350;">女</span>
<span class="c" style="left:443px;width:37px;text-align:right;top:499px;height:23px;line-height:23px;font-size:16.3px;color:#1a1a1a;font-weight:400;transform:scaleX(0.86);transform-origin:100% 50%;">40</span>
<span class="c" style="left:484px;width:88px;text-align:right;top:499px;height:23px;line-height:23px;font-size:16.3px;color:#1a1a1a;font-weight:400;transform:scaleX(0.86);transform-origin:100% 50%;">1981<span class="sl">/</span>1<span class="sl">/</span>4</span>
<span class="c" style="left:579px;text-align:left;top:499px;height:23px;line-height:23px;font-size:14px;color:#1a1a1a;font-weight:350;">長崎県</span>
<span class="c" style="left:122px;width:31px;text-align:right;top:522px;height:23px;line-height:23px;font-size:16.3px;color:#1a1a1a;font-weight:400;transform:scaleX(0.86);transform-origin:100% 50%;">11</span>
<span class="c" style="left:160px;text-align:left;top:522px;height:23px;line-height:23px;font-size:14px;color:#1a1a1a;font-weight:350;font-family:'Noto Sans CJK JP',sans-serif;word-spacing:3px;">多× 洋介</span>
<span class="c" style="left:260px;text-align:left;top:522px;height:23px;line-height:23px;font-size:14px;color:#1a1a1a;font-weight:350;font-family:'Noto Sans CJK JP',sans-serif;word-spacing:3px;">た× ようすけ</span>
<span class="c" style="left:405px;text-align:left;top:522px;height:23px;line-height:23px;font-size:14px;color:#1a1a1a;font-weight:350;">男</span>
<span class="c" style="left:443px;width:37px;text-align:right;top:522px;height:23px;line-height:23px;font-size:16.3px;color:#1a1a1a;font-weight:400;transform:scaleX(0.86);transform-origin:100% 50%;">66</span>
<span class="c" style="left:484px;width:88px;text-align:right;top:522px;height:23px;line-height:23px;font-size:16.3px;color:#1a1a1a;font-weight:400;transform:scaleX(0.86);transform-origin:100% 50%;">1954<span class="sl">/</span>10<span class="sl">/</span>23</span>
<span class="c" style="left:579px;text-align:left;top:522px;height:23px;line-height:23px;font-size:14px;color:#1a1a1a;font-weight:350;">富山県</span>
<span class="c" style="left:122px;width:31px;text-align:right;top:545px;height:23px;line-height:23px;font-size:16.3px;color:#1a1a1a;font-weight:400;transform:scaleX(0.86);transform-origin:100% 50%;">12</span>
<span class="c" style="left:160px;text-align:left;top:545px;height:23px;line-height:23px;font-size:14px;color:#1a1a1a;font-weight:350;font-family:'Noto Sans CJK JP',sans-serif;word-spacing:3px;">小〒原 秀樹</span>
<span class="c" style="left:260px;text-align:left;top:545px;height:23px;line-height:23px;font-size:14px;color:#1a1a1a;font-weight:350;font-family:'Noto Sans CJK JP',sans-serif;word-spacing:3px;">お〒わら ひでき</span>
<span class="c" style="left:405px;text-align:left;top:545px;height:23px;line-height:23px;font-size:14px;color:#1a1a1a;font-weight:350;">男</span>
<span class="c" style="left:443px;width:37px;text-align:right;top:545px;height:23px;line-height:23px;font-size:16.3px;color:#1a1a1a;font-weight:400;transform:scaleX(0.86);transform-origin:100% 50%;">69</span>
<span class="c" style="left:484px;width:88px;text-align:right;top:545px;height:23px;line-height:23px;font-size:16.3px;color:#1a1a1a;font-weight:400;transform:scaleX(0.86);transform-origin:100% 50%;">1952<span class="sl">/</span>2<span class="sl">/</span>4</span>
<span class="c" style="left:579px;text-align:left;top:545px;height:23px;line-height:23px;font-size:14px;color:#1a1a1a;font-weight:350;">東京都</span>
<span class="c" style="left:122px;width:31px;text-align:right;top:568px;height:23px;line-height:23px;font-size:16.3px;color:#1a1a1a;font-weight:400;transform:scaleX(0.86);transform-origin:100% 50%;">13</span>
<span class="c" style="left:160px;text-align:left;top:568px;height:23px;line-height:23px;font-size:14px;color:#1a1a1a;font-weight:350;font-family:'Noto Sans CJK JP',sans-serif;word-spacing:3px;">黒凹 花</span>
<span class="c" style="left:260px;text-align:left;top:568px;height:23px;line-height:23px;font-size:14px;color:#1a1a1a;font-weight:350;font-family:'Noto Sans CJK JP',sans-serif;word-spacing:3px;">くろ凹 はな</span>
<span class="c" style="left:405px;text-align:left;top:568px;height:23px;line-height:23px;font-size:14px;color:#1a1a1a;font-weight:350;">女</span>
<span class="c" style="left:443px;width:37px;text-align:right;top:568px;height:23px;line-height:23px;font-size:16.3px;color:#1a1a1a;font-weight:400;transform:scaleX(0.86);transform-origin:100% 50%;">44</span>
<span class="c" style="left:484px;width:88px;text-align:right;top:568px;height:23px;line-height:23px;font-size:16.3px;color:#1a1a1a;font-weight:400;transform:scaleX(0.86);transform-origin:100% 50%;">1976<span class="sl">/</span>11<span class="sl">/</span>24</span>
<span class="c" style="left:579px;text-align:left;top:568px;height:23px;line-height:23px;font-size:14px;color:#1a1a1a;font-weight:350;">愛媛県</span>
<span class="c" style="left:122px;width:31px;text-align:right;top:591px;height:23px;line-height:23px;font-size:16.3px;color:#1a1a1a;font-weight:400;transform:scaleX(0.86);transform-origin:100% 50%;">14</span>
<span class="c" style="left:160px;text-align:left;top:591px;height:23px;line-height:23px;font-size:14px;color:#1a1a1a;font-weight:350;font-family:'Noto Sans CJK JP',sans-serif;word-spacing:3px;">村♭ 昌代</span>
<span class="c" style="left:260px;text-align:left;top:591px;height:23px;line-height:23px;font-size:14px;color:#1a1a1a;font-weight:350;font-family:'Noto Sans CJK JP',sans-serif;word-spacing:3px;">むら♭ まさよ</span>
<span class="c" style="left:405px;text-align:left;top:591px;height:23px;line-height:23px;font-size:14px;color:#1a1a1a;font-weight:350;">女</span>
<span class="c" style="left:443px;width:37px;text-align:right;top:591px;height:23px;line-height:23px;font-size:16.3px;color:#1a1a1a;font-weight:400;transform:scaleX(0.86);transform-origin:100% 50%;">74</span>
<span class="c" style="left:484px;width:88px;text-align:right;top:591px;height:23px;line-height:23px;font-size:16.3px;color:#1a1a1a;font-weight:400;transform:scaleX(0.86);transform-origin:100% 50%;">1946<span class="sl">/</span>11<span class="sl">/</span>12</span>
<span class="c" style="left:579px;text-align:left;top:591px;height:23px;line-height:23px;font-size:14px;color:#1a1a1a;font-weight:350;">北海道</span>
<span class="c" style="left:122px;width:31px;text-align:right;top:614px;height:21px;line-height:21px;font-size:16.3px;color:#1a1a1a;font-weight:400;transform:scaleX(0.86);transform-origin:100% 50%;">15</span>
<span class="c" style="left:160px;text-align:left;top:614px;height:21px;line-height:21px;font-size:14px;color:#1a1a1a;font-weight:350;font-family:'Noto Sans CJK JP',sans-serif;word-spacing:3px;">∀沢 明</span>
<span class="c" style="left:260px;text-align:left;top:614px;height:21px;line-height:21px;font-size:14px;color:#1a1a1a;font-weight:350;font-family:'Noto Sans CJK JP',sans-serif;word-spacing:3px;">∀ざわ あきら</span>
<span class="c" style="left:405px;text-align:left;top:614px;height:21px;line-height:21px;font-size:14px;color:#1a1a1a;font-weight:350;">男</span>
<span class="c" style="left:443px;width:37px;text-align:right;top:614px;height:21px;line-height:21px;font-size:16.3px;color:#1a1a1a;font-weight:400;transform:scaleX(0.86);transform-origin:100% 50%;">64</span>
<span class="c" style="left:484px;width:88px;text-align:right;top:614px;height:21px;line-height:21px;font-size:16.3px;color:#1a1a1a;font-weight:400;transform:scaleX(0.86);transform-origin:100% 50%;">1956<span class="sl">/</span>5<span class="sl">/</span>27</span>
<span class="c" style="left:579px;text-align:left;top:614px;height:21px;line-height:21px;font-size:14px;color:#1a1a1a;font-weight:350;">大阪府</span>
<svg class="b" style="left:0;top:0" width="900" height="635" viewBox="0 0 900 635"><g fill="#fff"><rect x="121.85" y="291.3" width="546" height="1"/><rect x="121.85" y="291.3" width="1" height="343.7"/><rect x="666.4" y="291.3" width="1.5" height="343.7"/></g><g fill="#222222"><rect x="120.67" y="266.77" width="1.25" height="368.23"/><rect x="156.07" y="266.77" width="1.25" height="368.23"/><rect x="255.57" y="266.77" width="1.25" height="368.23"/><rect x="401.07" y="266.77" width="1.25" height="368.23"/><rect x="441.77" y="266.77" width="1.25" height="368.23"/><rect x="482.68" y="266.77" width="1.25" height="368.23"/><rect x="575.08" y="266.77" width="1.25" height="368.23"/><rect x="667.67" y="266.77" width="1.25" height="368.23"/><rect x="120.67" y="266.77" width="548.25" height="1.25"/><rect x="120.67" y="290.23" width="548.25" height="1.25"/><rect x="120.67" y="313.38" width="548.25" height="1.25"/><rect x="120.67" y="336.53" width="548.25" height="1.25"/><rect x="120.67" y="359.68" width="548.25" height="1.25"/><rect x="120.67" y="382.83" width="548.25" height="1.25"/><rect x="120.67" y="405.98" width="548.25" height="1.25"/><rect x="120.67" y="429.12" width="548.25" height="1.25"/><rect x="120.67" y="452.27" width="548.25" height="1.25"/><rect x="120.67" y="475.43" width="548.25" height="1.25"/><rect x="120.67" y="498.58" width="548.25" height="1.25"/><rect x="120.67" y="521.73" width="548.25" height="1.25"/><rect x="120.67" y="544.88" width="548.25" height="1.25"/><rect x="120.67" y="568.02" width="548.25" height="1.25"/><rect x="120.67" y="591.17" width="548.25" height="1.25"/><rect x="120.67" y="614.33" width="548.25" height="1.25"/></g><g fill="#217346"><rect x="120" y="289.6" width="549.7" height="1.7"/><rect x="120" y="289.6" width="1.8" height="345.4"/><rect x="668" y="289.6" width="1.7" height="345.4"/></g></svg>
<div class="b" style="left:0px;top:635px;width:900px;height:25px;background:#e6e6e6;border-top:1px solid #c6c6c6;box-sizing:border-box"></div>
<div class="b" style="left:88px;top:635px;width:65px;height:22px;background:#fff;border-bottom:2px solid #217346;border-left:1px solid #cfcfcf;border-right:1px solid #cfcfcf;box-sizing:border-box"></div>
<span class="t" style="left:101.00px;top:638.00px;font-size:12px;line-height:18px;color:#217346;font-weight:400;transform:scaleX(0.9883);-webkit-text-stroke:0.2px #217346;">Sheet1</span>
<svg class="b" style="left:20px;top:641px" width="10" height="12" viewBox="0 0 10 12"><path d="M7 2.5l-4 3.5l4 3.5z" fill="#c3c3c3"/></svg>
<svg class="b" style="left:45px;top:641px" width="10" height="12" viewBox="0 0 10 12"><path d="M3 2.5l4 3.5l-4 3.5z" fill="#c3c3c3"/></svg>
<svg class="b" style="left:181px;top:639px" width="16" height="16" viewBox="0 0 16 16"><circle cx="8" cy="8" r="6.3" fill="none" stroke="#6a6a6a" stroke-width="1"/><path d="M8 4.5v7 M4.5 8h7" stroke="#6a6a6a" stroke-width="1.1"/></svg>
<div class="b" style="left:728px;top:643px;width:1px;height:1px;background:#8a8a8a"></div>
<div class="b" style="left:728px;top:647px;width:1px;height:1px;background:#8a8a8a"></div>
<div class="b" style="left:728px;top:651px;width:1px;height:1px;background:#8a8a8a"></div>
<div class="b" style="left:743px;top:641px;width:160px;height:13px;background:#fff;border:1px solid #b9b9b9;box-sizing:border-box"></div>
<div class="b" style="left:755px;top:641px;width:1px;height:13px;background:#b9b9b9"></div>
<svg class="b" style="left:745px;top:643px" width="10" height="9" viewBox="0 0 10 9"><path d="M6.5 1l-4 3.5l4 3.5z" fill="#444"/></svg>
<div class="b" style="left:0px;top:660px;width:900px;height:17px;background:#f3f2f1"></div>
<span class="t" style="left:5.00px;top:661.00px;font-size:11.5px;line-height:17px;color:#333;font-weight:500;transform:scaleX(0.9988);">ScrollLock</span>
<svg class="b" style="left:12px;top:58px;overflow:visible" width="30" height="32" viewBox="12 58 30 32"><path d="M15.2 64.2v18.4a9.3 3.4 0 0 0 9.6 3.4 M33.8 64.2v8.6" fill="none" stroke="#444444" stroke-width="1.2"/><ellipse cx="24.5" cy="64.2" rx="9.3" ry="3.5" fill="#f3f2f1" stroke="#444444" stroke-width="1.2"/><rect x="25.6" y="73.8" width="13.3" height="13" fill="#fff" stroke="#444444" stroke-width="1.2"/><rect x="25.6" y="73.8" width="13.3" height="2.8" fill="#9b9997"/><path d="M25.6 80.2h13.3 M25.6 83.5h13.3 M30 76.8v10 M34.4 76.8v10" stroke="#444444" stroke-width="0.85"/></svg>
<svg class="b" style="left:47px;top:58px;overflow:visible" width="16" height="17" viewBox="47 58 16 17"><path d="M57.5 73H49.2V59.4h5.6l4 4v3" fill="none" stroke="#444444" stroke-width="1.1"/><path d="M54.8 59.4v4h4" fill="none" stroke="#444444" stroke-width="1.1"/><rect x="56.3" y="66.2" width="4.2" height="6.8" fill="#e8e8e8" stroke="#444444" stroke-width="1"/><path d="M58.4 67v5.5" stroke="#8a8886" stroke-width="0.8"/></svg>
<svg class="b" style="left:47px;top:79px;overflow:visible" width="16" height="17" viewBox="47 79 16 17"><path d="M52.5 93.2H49.2V79.8h5.6l4 4v1.5" fill="none" stroke="#444444" stroke-width="1.1"/><path d="M54.8 79.8v4h4" fill="none" stroke="#444444" stroke-width="1.1"/><circle cx="57.3" cy="89.6" r="4.4" fill="#1e8ad6"/><path d="M53.5 88.3h7.6 M53.5 91h7.6 M57.3 85.6v8" stroke="#cfe6f7" stroke-width="0.8" fill="none"/></svg>
<svg class="b" style="left:46px;top:99px;overflow:visible" width="16" height="16" viewBox="46 99 16 16"><rect x="47.3" y="100.2" width="13" height="12.6" fill="#fff" stroke="#444444" stroke-width="1.2"/><path d="M47.3 104h13 M47.3 107h13 M47.3 110h13 M53.8 104v8.8" stroke="#444444" stroke-width="0.9"/><path d="M49 101.4h3l-1.5 1.7z M55.5 101.4h3l-1.5 1.7z" fill="#1e8ad6"/></svg>
<svg class="b" style="left:175px;top:58px;overflow:visible" width="16" height="17" viewBox="175 58 16 17"><path d="M180 72.6H176.6V59.2h5.2l4 4v1.3" fill="none" stroke="#444444" stroke-width="1.1"/><path d="M181.8 59.2v4h4" fill="none" stroke="#444444" stroke-width="1.1"/><circle cx="184.5" cy="69.2" r="3.6" fill="#fff" stroke="#1e8ad6" stroke-width="1.4"/><path d="M184.5 67.3v2.1h1.7" stroke="#444444" stroke-width="0.9" fill="none"/></svg>
<svg class="b" style="left:175px;top:79px;overflow:visible" width="16" height="17" viewBox="175 79 16 17"><path d="M180 93.2H176.6V79.8h5.2l4 4v0.6" fill="none" stroke="#444444" stroke-width="1.1"/><path d="M181.8 79.8v4h4" fill="none" stroke="#444444" stroke-width="1.1"/><path d="M181.4 86.4v5.4a3.3 1.4 0 0 0 6.6 0v-5.4" fill="#fff" stroke="#e08a33" stroke-width="1.3"/><ellipse cx="184.7" cy="86.4" rx="3.3" ry="1.4" fill="#fff" stroke="#e08a33" stroke-width="1.3"/></svg>
<svg class="b" style="left:290px;top:58px;overflow:visible" width="30" height="32" viewBox="290 58 30 32"><path d="M293 83.2V61.5h11.8" fill="none" stroke="#444444" stroke-width="1.2"/><path d="M303.5 85.4h-7.7V64.4h9.8l5.8 5.8v3" fill="none" stroke="#444444" stroke-width="1.2"/><path d="M305.6 64.4v5.8h5.8" fill="none" stroke="#444444" stroke-width="1.2"/><path d="M304.2 79.6a6 6 0 0 1 10.6-3.4 M315.9 81.4a6 6 0 0 1-10.6 3.4" fill="none" stroke="#3a9b62" stroke-width="1.5"/><path d="M316.5 73.2v4.4h-4.4z M303.7 87.8v-4.4h4.4z" fill="#3a9b62"/></svg>
<svg class="b" style="left:323px;top:60px;overflow:visible" width="16" height="14" viewBox="323 60 16 14"><rect x="324.3" y="61.4" width="12.8" height="11" fill="#fff" stroke="#444444" stroke-width="1.2"/><rect x="324.3" y="61" width="12.8" height="2.2" fill="#6b6a69"/><rect x="332.2" y="63.4" width="4.3" height="8.6" fill="#1e8ad6"/><path d="M334.3 64.5v6.5" stroke="#bfe0f5" stroke-width="0.9" stroke-dasharray="1.2 1"/></svg>
<svg class="b" style="left:324px;top:80px;overflow:visible" width="14" height="16" viewBox="324 80 14 16"><rect x="326" y="81.8" width="9.6" height="13" fill="none" stroke="#b0afae" stroke-width="1.1"/><rect x="328" y="85" width="2" height="2" fill="#b0afae"/><rect x="328" y="89.6" width="2" height="2" fill="#b0afae"/><path d="M331.5 86h2.2 M331.5 90.6h2.2" stroke="#b0afae" stroke-width="1"/></svg>
<svg class="b" style="left:324px;top:102px;overflow:visible" width="14" height="16" viewBox="324 102 14 16"><path d="M328.5 116H326V103.4h5.4l4 4v2.4" fill="none" stroke="#b0afae" stroke-width="1.1"/><path d="M331.4 103.4v4h4" fill="none" stroke="#b0afae" stroke-width="1.1"/><path d="M331.2 112.2a2.2 2.2 0 1 0 0 4.2h1.2 M334.6 112.2a2.2 2.2 0 1 1 0 4.2h-1.2 M331.4 114.3h3" fill="none" stroke="#b0afae" stroke-width="1.1"/></svg>
<svg class="b" style="left:437px;top:66px;overflow:visible" width="28" height="24" viewBox="437 66 28 24"><path d="M438.4 74.5l11.9-6.3l11.9 6.3z" fill="none" stroke="#3b3a39" stroke-width="1.2" stroke-linejoin="round"/><path d="M441.4 75v10.5 M445.8 75v10.5 M450.3 75v10.5 M454.8 75v10.5 M459.2 75v10.5" stroke="#3b3a39" stroke-width="1.1"/><path d="M439.6 85.8h21.4 M438 88.4h24.6" stroke="#3b3a39" stroke-width="1.2"/></svg>
<svg class="b" style="left:511px;top:66px;overflow:visible" width="28" height="24" viewBox="511 66 28 24"><path d="M512.6 71.5l8-3.4l8.2 3.4l8-3.4v17l-8 3.4l-8.2-3.4l-8 3.4z M520.6 68.1v17 M528.8 71.5v17" fill="none" stroke="#3b3a39" stroke-width="1.2" stroke-linejoin="round"/></svg>
<svg class="b" style="left:595px;top:66px;overflow:visible" width="16" height="16" viewBox="595 66 16 16"><text x="595.4" y="74" font-family="Liberation Sans,sans-serif" font-size="9" font-weight="700" fill="#1e8ad6" stroke="#1e8ad6" stroke-width="0">A</text><text x="595.9" y="81.4" font-family="Liberation Sans,sans-serif" font-size="9" font-weight="400" fill="#444444" stroke="#444444" stroke-width="0.3">Z</text><path d="M607 67.4v12.6 M603.8 77.2l3.2 3.2l3.2-3.2" fill="none" stroke="#444444" stroke-width="1.1"/></svg>
<svg class="b" style="left:595px;top:94px;overflow:visible" width="16" height="16" viewBox="595 94 16 16"><text x="595.9" y="102" font-family="Liberation Sans,sans-serif" font-size="9" font-weight="400" fill="#444444" stroke="#444444" stroke-width="0.3">Z</text><text x="595.4" y="109.6" font-family="Liberation Sans,sans-serif" font-size="9" font-weight="700" fill="#1e8ad6" stroke="#1e8ad6" stroke-width="0">A</text><path d="M607 95.4v12.6 M603.8 105.2l3.2 3.2l3.2-3.2" fill="none" stroke="#444444" stroke-width="1.1"/></svg>
<svg class="b" style="left:620px;top:59px;overflow:visible" width="28" height="28" viewBox="620 59 28 28"><rect x="621.6" y="60.8" width="24.6" height="24" fill="#fff" stroke="#444444" stroke-width="1.2"/><path d="M621.6 64.4h24.6 M633.9 64.4v20.4" stroke="#444444" stroke-width="1.2"/><text x="625.3" y="74.2" font-family="Liberation Sans,sans-serif" font-size="9" font-weight="400" fill="#444444" stroke="#444444" stroke-width="0.3">Z</text><text x="624.8" y="82.6" font-family="Liberation Sans,sans-serif" font-size="9" font-weight="700" fill="#1e8ad6" stroke="#1e8ad6" stroke-width="0">A</text><text x="636.9" y="74.2" font-family="Liberation Sans,sans-serif" font-size="9" font-weight="700" fill="#1e8ad6" stroke="#1e8ad6" stroke-width="0">A</text><text x="637.4" y="82.6" font-family="Liberation Sans,sans-serif" font-size="9" font-weight="400" fill="#444444" stroke="#444444" stroke-width="0.3">Z</text></svg>
<svg class="b" style="left:670px;top:59px;overflow:visible" width="28" height="28" viewBox="670 59 28 28"><path d="M672.2 61.4h24.4v2.6l-8.6 9.6v10.8h-7.2v-10.8l-8.6-9.6z" fill="#fff" stroke="#444444" stroke-width="1.3" stroke-linejoin="round"/></svg>
<svg class="b" style="left:708px;top:59px;overflow:visible" width="16" height="16" viewBox="708 59 16 16"><path d="M709.6 61h13v1.6l-5 5.2v6h-0.1 M709.6 61v1.6l5 5.2v6.4" fill="none" stroke="#b0afae" stroke-width="1.2" stroke-linejoin="round"/><path d="M718.2 68.6l4.4 4.4 M722.6 68.6l-4.4 4.4" stroke="#b0afae" stroke-width="1.1"/></svg>
<svg class="b" style="left:708px;top:80px;overflow:visible" width="16" height="16" viewBox="708 80 16 16"><path d="M709.6 82.4h13v1.6l-5 5.2v6h-0.1 M709.6 82.4v1.6l5 5.2v6.4" fill="none" stroke="#b0afae" stroke-width="1.2" stroke-linejoin="round"/><path d="M717.2 91.6a3.2 3.2 0 0 1 5.6-2 M723 93a3.2 3.2 0 0 1-5.6 1.6" fill="none" stroke="#b0afae" stroke-width="1.1"/><path d="M723.4 87.4v2.6h-2.6z M716.8 96.6v-2.6h2.6z" fill="#b0afae"/></svg>
<svg class="b" style="left:708px;top:101px;overflow:visible" width="16" height="17" viewBox="708 101 16 17"><path d="M709.6 103.6h13v1.6l-5 5.2v6h-0.1 M709.6 103.6v1.6l5 5.2v6.4" fill="none" stroke="#2b2b2b" stroke-width="1.2" stroke-linejoin="round"/><path d="M719.6 108.4v7.6 M716.3 110.3l6.6 3.8 M716.3 114.1l6.6-3.8" stroke="#1e8ad6" stroke-width="1.5"/><circle cx="719.6" cy="112.2" r="2.5" fill="#1e8ad6"/><circle cx="719.6" cy="112.2" r="1.1" fill="#f3f2f1"/></svg>
<svg class="b" style="left:800px;top:59px;overflow:visible" width="30" height="28" viewBox="800 59 30 28"><path d="M804.8 64.8h11 M804.8 67.8h11 M804.8 70.9h11" stroke="#444444" stroke-width="1.1"/><path d="M806.4 72.4c-5.5 1.6-6.4 7.4 0.6 9.4l4.6 0.6" fill="none" stroke="#1e8ad6" stroke-width="1.3"/><path d="M808.4 78.6l4 3.9l-4.8 3" fill="none" stroke="#1e8ad6" stroke-width="1.3"/><rect x="819.4" y="60.4" width="8.4" height="24.8" rx="0.8" fill="#fff" stroke="#444444" stroke-width="1.2"/><path d="M819.4 68.6h8.4 M819.4 76.8h8.4" stroke="#444444" stroke-width="1.1"/><path d="M822 64.6h3.2 M822 72.8h3.2 M822 81h3.2" stroke="#1e8ad6" stroke-width="1.3"/></svg>
<svg class="b" style="left:845px;top:58px;overflow:visible" width="17" height="15" viewBox="845 58 17 15"><rect x="846.8" y="60.6" width="13.4" height="10.8" fill="#fff" stroke="#444444" stroke-width="1.1"/><path d="M846.8 64.2h13.4 M846.8 67.8h13.4 M851.2 60.6v10.8 M855.6 60.6v10.8" stroke="#444444" stroke-width="0.9"/><path d="M851.2 64.2v7 M855.6 61v10.4 M851.2 67.8h9" stroke="#1e8ad6" stroke-width="1"/><path d="M851.4 58.6l-4.8 5.4h2.6l-2.2 4.2l5.6-6h-2.6z" fill="#e8762c"/></svg>
<svg class="b" style="left:845px;top:79px;overflow:visible" width="17" height="16" viewBox="845 79 17 16"><rect x="846.8" y="80" width="9.8" height="13.2" fill="#fff" stroke="#1e8ad6" stroke-width="1.2"/><rect x="846.8" y="80" width="9.8" height="4.2" fill="#1e8ad6"/><path d="M846.8 88.6h9.8" stroke="#1e8ad6" stroke-width="1"/><rect x="847.4" y="89.2" width="4" height="3.4" fill="#1e8ad6"/><path d="M853.6 87.4l6.4 6.4 M860 87.4l-6.4 6.4" stroke="#e03a3e" stroke-width="1.4"/></svg>
<svg class="b" style="left:845px;top:99px;overflow:visible" width="17" height="16" viewBox="845 99 17 16"><path d="M851.4 103.4h-4.8v3.2h4.8 M851.4 109h-4.8v3.2h4.8" fill="none" stroke="#444444" stroke-width="1.1"/><path d="M852.8 102.6l2.2 2.2l4.6-4.8" fill="none" stroke="#3a9b62" stroke-width="1.3"/><circle cx="856.4" cy="110" r="3.1" fill="#fff" stroke="#e03a3e" stroke-width="1.3"/><path d="M854.2 107.8l4.4 4.4" stroke="#e03a3e" stroke-width="1.2"/></svg>
<svg class="b" style="left:878px;top:58px;overflow:visible" width="17" height="15" viewBox="878 58 17 15"><path d="M884.6 60h-4.6v4.2h4.6 M884.6 66.8h-4.6v4.2h4.6" fill="none" stroke="#444444" stroke-width="1.2"/><rect x="887.6" y="63.2" width="6" height="4.4" fill="#fff" stroke="#1e8ad6" stroke-width="1.2"/><path d="M882.4 65.4h5.2 M885.8 63.8l1.8 1.6l-1.8 1.6" fill="none" stroke="#1e8ad6" stroke-width="1"/><path d="M889.4 65.4h2.4" stroke="#1e8ad6" stroke-width="1"/></svg>
<svg class="b" style="left:878px;top:79px;overflow:visible" width="17" height="15" viewBox="878 79 17 15"><rect x="879.6" y="84" width="5" height="4.6" fill="#e3e3e3" stroke="#b0afae" stroke-width="1"/><rect x="888.4" y="80" width="5" height="4.6" fill="#e3e3e3" stroke="#b0afae" stroke-width="1"/><rect x="888.4" y="88" width="5" height="4.6" fill="#e3e3e3" stroke="#b0afae" stroke-width="1"/><path d="M884.6 86.3h2v-4h1.8 M886.6 86.3v4h1.8" fill="none" stroke="#b0afae" stroke-width="1"/></svg>
<svg class="b" style="left:878px;top:99px;overflow:visible" width="17" height="16" viewBox="878 99 17 16"><path d="M880 103.4l6.6-2.8v12.8l-6.6-1.6z" fill="#5aa13a"/><rect x="884" y="102.4" width="9.6" height="10" rx="0.6" fill="#6fb544"/><path d="M884 105.6h9.6 M884 108.8h9.6 M888.6 102.4v10" stroke="#d7ecc9" stroke-width="0.8"/><path d="M886.2 111v-5.2l2.6-0.6v4.6" fill="none" stroke="#fff" stroke-width="0.9"/><circle cx="885.5" cy="111" r="0.9" fill="#fff"/><circle cx="888.1" cy="109.9" r="0.9" fill="#fff"/></svg>
<div class="b" style="left:412px;top:309px;width:405px;height:110px;box-shadow:3px 4px 13px 2px rgba(0,0,0,0.33);background:#f0f0f0"></div>
<div class="b" style="left:410.5px;top:307px;width:406.5px;height:109.5px;background:#fff"></div>
<div class="b" style="left:410.5px;top:417px;width:406px;height:1.1px;background:#8c8c8c"></div>
<div class="b" style="left:410.5px;top:307px;width:405.5px;height:107.5px;background:#f0f0f0"></div>
<div class="b" style="left:410.5px;top:307px;width:406.5px;height:28px;background:#fff"></div>
<div class="b" style="left:410.5px;top:307px;width:406.5px;height:1px;background:#c9ccd4"></div>
<span class="t" style="left:415.50px;top:313.20px;font-size:11px;line-height:16px;color:#000;font-weight:500;transform:scaleX(0.9587);">Microsoft Excel</span>
<svg class="b" style="left:798px;top:315px" width="12" height="12" viewBox="0 0 12 12"><path d="M1.4 1.2l9.2 9.2 M10.6 1.2l-9.2 9.2" stroke="#111" stroke-width="1.1" fill="none"/></svg>
<div class="b" style="left:423.2px;top:348.8px;width:27px;height:27px;border-radius:50%;background:#0a74d3"></div>
<div class="b" style="left:435.8px;top:355px;width:2px;height:2.4px;background:#fff"></div>
<div class="b" style="left:435.8px;top:359.4px;width:2px;height:10.2px;background:#fff"></div>
<span class="t" style="left:465.50px;top:353.50px;font-size:11.5px;line-height:17px;color:#000;font-weight:500;">重複<span class="k" style="width:15.15px"><span style="transform:scaleX(0.7311)">する</span></span><span style="font-size:0.9em"> 3 </span>個<span class="k" style="width:8.11px"><span style="transform:scaleX(0.7311)">の</span></span>値<span class="k" style="width:8.24px"><span style="transform:scaleX(0.7311)">が</span></span>見<span class="k" style="width:23.03px"><span style="transform:scaleX(0.7311)">つかり</span></span><span class="k p" style="width:8.41px"><span style="transform:scaleX(0.7311)">、</span></span>削除<span class="k" style="width:38.80px"><span style="transform:scaleX(0.7311)">されました</span></span><span class="k p" style="width:8.41px"><span style="transform:scaleX(0.7311)">。</span></span>一意<span class="k" style="width:8.11px"><span style="transform:scaleX(0.7311)">の</span></span>値<span class="k" style="width:8.24px"><span style="transform:scaleX(0.7311)">が</span></span><span style="font-size:0.9em"> 27 </span>個残<span class="k" style="width:37.32px"><span style="transform:scaleX(0.7311)">っています</span></span><span class="k p" style="width:8.41px"><span style="transform:scaleX(0.7311)">。</span></span></span>
<div class="b" style="left:575.5px;top:385.5px;width:74px;height:21px;background:#e1e1e1;border:2px solid #0078d7;box-sizing:border-box"></div>
<span class="t" style="left:604.50px;top:387.70px;font-size:11.5px;line-height:17px;color:#000;font-weight:500;transform:scaleX(0.9624);">OK</span>
<div class="b" style="left:408px;top:303.7px;width:411.4px;height:118.7px;border:2.5px solid #ff0000;box-sizing:border-box"></div>
</div>
</body></html>
